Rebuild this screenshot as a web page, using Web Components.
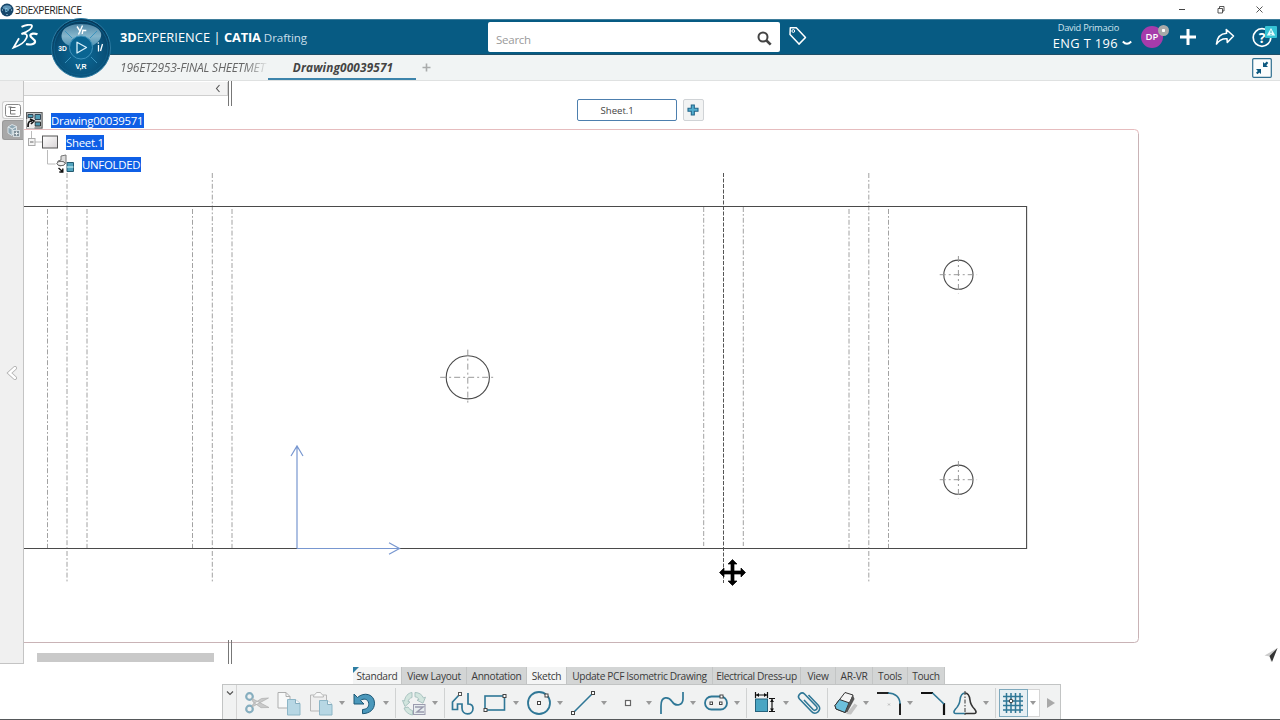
<!DOCTYPE html>
<html lang="en">
<head>
<meta charset="utf-8">
<title>3DEXPERIENCE</title>
<style>
html, body{
  margin:0;
  height:100%;
  overflow:hidden;
  background:#fff;
}
body{
  font-family:"Open Sans","Noto Sans",sans-serif;
  color:#3d3d3d;
}
</style>
</head>
<body>
<app-window></app-window>

<script>
// small helper: one template per element, open shadow root
function define(name, html){
  const tpl = document.createElement('template');
  tpl.innerHTML = html;
  customElements.define(name, class extends HTMLElement{
    constructor(){
      super();
      this.attachShadow({mode:'open'});
      this.shadowRoot.appendChild(tpl.content.cloneNode(true));
    }
  });
}

/* ---------- title bar ---------- */
define('title-bar', `
<style>
:host{
  display:flex;
  align-items:center;
  height:19px;
  background:#fff;
  color:#222;
}
.logo{ width:14px; height:14px; margin-left:0; }
.name{ font-size:10.4px; line-height:18px; margin-left:1px; letter-spacing:-0.5px; flex:1; }
.win{ display:flex; gap:29px; padding-right:15px; }
.win svg{ width:10px; height:10px; fill:none; stroke:#444; }
</style>
<svg class="logo" viewBox="0 0 14 14"><circle cx="7" cy="7" r="6.5" fill="#16466a"/><path d="M2.5 5a4.6 3.6 0 0 1 9 0c-2 2-7 2-9 0z" fill="#5e93b5"/><path d="M5.8 5l3 2-3 2z" fill="none" stroke="#8fd0ee" stroke-width=".8"/><path d="M2 7h1M11 7h1M7 11v1" stroke="#bfe1f1"/></svg>
<span class="name">3DEXPERIENCE</span>
<div class="win">
  <svg viewBox="0 0 10 10"><path d="M2 4.5h6"/></svg>
  <svg viewBox="0 0 10 10"><path d="M2 3.5h4.500V8H2zM3.500 3.500V1.500H8v4.500H6.500" stroke-width=".9"/></svg>
  <svg viewBox="0 0 10 10"><path d="M1.500 1.500l6 6M7.500 1.500l-6 6" stroke-width=".9"/></svg>
</div>
`);

/* ---------- compass ---------- */
define('app-compass', `
<style>
:host{ display:block; width:62px; height:62px; }
svg{ display:block; width:62px; height:62px; }
text{ font-family:"Liberation Sans",sans-serif; font-weight:bold; font-size:8px; fill:#fff; text-anchor:middle; }
</style>
<svg viewBox="0 0 62 62">
  <defs>
    <radialGradient id="ball" cx="50%" cy="62%" r="60%"><stop offset="0" stop-color="#0b6a98"/><stop offset=".7" stop-color="#095078"/><stop offset="1" stop-color="#06395a"/></radialGradient>
    <linearGradient id="cap" x1="0" y1="0" x2="0" y2="1"><stop offset="0" stop-color="#4f86a6"/><stop offset=".55" stop-color="#86b6cc"/><stop offset="1" stop-color="#4f93b5"/></linearGradient>
  </defs>
  <circle cx="31" cy="31" r="29.500" fill="url(#ball)" stroke="#2b7ba3"/>
  <circle cx="31" cy="31" r="27" fill="none" stroke="#0d5f8a"/>
  <path d="M12 16c3-12 35-12 39 0 1 5-2 9-9 13C40 17 23 17 20 29c-6-2-10-7-8-13z" fill="url(#cap)"/>
  <path d="M15 14l7 7M47 14l-7 7M15 46l6-6M47 46l-6-6" stroke="#3c93bd" fill="none"/>
  <circle cx="31" cy="30.500" r="11.500" fill="#0a6592" stroke="#3f92bb"/>
  <path d="M27 25.200l9.500 5.300-9.500 5.500z" fill="none" stroke="#d9f1fb" stroke-width="1.300" stroke-linejoin="round"/>
  <path d="M27 9.500l3 4.500-1.500 3.500M32.500 8.500l-3 7M33 12.500l-.8 4.500M33.300 13.500h3" fill="none" stroke="#fff" stroke-width="1.400"/>
  <text x="12.500" y="34" textLength="8.500" lengthAdjust="spacingAndGlyphs">3D</text>
  <path d="M48.500 28v6.500M50.500 34l2-7" fill="none" stroke="#fff" stroke-width="1.300"/><circle cx="48.300" cy="26" r=".8" fill="#fff"/>
  <text x="31" y="51.500" textLength="11" lengthAdjust="spacingAndGlyphs">V,R</text>
</svg>
`);

/* ---------- blue top bar ---------- */
define('top-bar', `
<style>
:host{
  display:flex;
  align-items:center;
  height:36px;
  background:#075b83;
  border-top:1px solid #3f7d9b;
  box-sizing:border-box;
  box-shadow:inset 0 -1px #1e4f68;
  position:relative;
  color:#fff;
}
svg{ display:block; fill:none; stroke:#fff; }
.ds{ width:28px; height:28px; margin-left:11px; }
app-compass{ position:absolute; left:50px; top:-3px; z-index:3; }
.brand{
  margin-left:81px;
  width:368px;
  display:flex;
  align-items:baseline;
  font-size:12.8px;
  line-height:20px;
  white-space:pre;
}
.brand .a{ letter-spacing:0.06px; }
.brand .c{ font-weight:bold; letter-spacing:-0.15px; }
.brand .d{ font-size:11.6px; color:#c9dfea; letter-spacing:-0.1px; }
.search{
  width:292px;
  height:30px;
  margin-top:-2px;
  background:#fff;
  border-radius:2px;
  display:flex;
  align-items:center;
  justify-content:space-between;
  box-sizing:border-box;
  padding:4px 8px 0 8px;
  font-size:11.5px;
  color:#9a9a9a;
  letter-spacing:-0.25px;
}
.search span{ padding-top:2px; }
.search svg{ width:15px; height:15px; stroke:#444; margin-bottom:1px; }
.tag{ width:20px; height:20px; margin:-3px 0 0 8px; }
.right{ margin-left:auto; margin-top:-2px; display:flex; align-items:center; padding-right:11px; }
.user{ display:flex; flex-direction:column; align-items:flex-end; white-space:nowrap; }
.user .n{ font-size:9.3px; line-height:12px; color:#cfe4ee; padding-right:13px; letter-spacing:-0.26px;}
.user .t{ font-size:12.8px; line-height:18px; font-weight:500; display:flex; align-items:center; gap:4px; letter-spacing:.4px; }
.user .t svg{ width:10px; height:6px; }
.avatar{
  width:22px; height:22px; margin-left:9px; border-radius:50%;
  background:#a63bab; font-size:9.500px; font-weight:600; line-height:22px; text-align:center; position:relative;
}
.avatar i{
  position:absolute; right:-6px; top:-1px; width:7px; height:7px; box-sizing:content-box;
  border-radius:50%; background:radial-gradient(#fff 1.300px,#a9aaa9 2px); border:2px solid #a9aaa9;
}
.plus{ width:18px; height:18px; margin-left:16px; }
.share{ width:20px; height:20px; margin-left:18px; }
.help{ width:26px; height:24px; margin-left:17px; margin-right:-9px; }
.help text{ font-family:"Open Sans",sans-serif; font-weight:bold; font-size:14px; fill:#fff; stroke:none; text-anchor:middle; }
</style>
<svg class="ds" viewBox="0 0 28 28">
  <path d="M10.500 2.800c4-2 10.500-3 10.500-.8 0 2.800-5 5.800-10.500 7.800" stroke-width="1.900"/>
  <path d="M10.500 9.800c4.500-.8 6.500.8 5 4.200C13.800 18 9 21.500 2.500 23.600L8 14.200" stroke-width="1.800"/>
  <path d="M26.500 10.300c-3.200-1.400-7-.7-7.200 1.300-.2 2 5 3.500 4.800 6-.2 2.800-5 3.500-9.100 2.400" stroke-width="2.200"/>
</svg>
<app-compass></app-compass>
<div class="brand"><b>3D</b><span class="a">EXPERIENCE | </span><span class="c">CATIA </span><span class="d">Drafting</span></div>
<div class="search"><span>Search</span>
  <svg viewBox="0 0 15 15"><circle cx="6" cy="6" r="4.500" stroke-width="2"/><path d="M9.500 9.500l4.200 4.200" stroke-width="2.600"/></svg>
</div>
<svg class="tag" viewBox="0 0 20 20"><path d="M2.300 1.800h6l9.200 9.700-6.500 6.600-9-9.600z" stroke-width="1.500" stroke-linejoin="round"/><circle cx="5.300" cy="5" r="1.400"/></svg>
<div class="right">
  <div class="user">
    <span class="n">David Primacio</span>
    <span class="t"><span>ENG T 196</span><svg viewBox="0 0 10 6"><path d="M.8 1.500Q5 6 9.200 1.500" stroke-width="1.900"/></svg></span>
  </div>
  <div class="avatar">DP<i></i></div>
  <svg class="plus" viewBox="0 0 18 18"><path d="M9 1v16M1 9h16" stroke-width="3"/></svg>
  <svg class="share" viewBox="0 0 20 20"><path d="M11.300 2.500l7.200 6.500-6.200 6.500-.3-3.700c-5-.4-8 1.600-10.500 5.200C2 11 5.500 6.700 11.600 6.300z" stroke-width="1.600" stroke-linejoin="round"/></svg>
  <svg class="help" viewBox="0 0 26 24"><circle cx="10" cy="12.500" r="8.800" stroke-width="1.700"/><text x="10" y="17.500">?</text><rect x="13" y="1" width="12" height="12" rx="1" fill="#36c3d5" stroke="none"/><path d="M19 3l4.200 7.500h-8.400z" fill="#e8fbfd" stroke="none"/><path d="M19 5.500v2.600M19 9v1" stroke="#2aa6b8"/></svg>
</div>
`);

/* ---------- document tabs ---------- */
define('doc-tabs', `
<style>
:host{
  display:flex;
  height:26px;
  box-sizing:border-box;
  background:#f1f4f4;
  border-bottom:1px solid #dfe1e1;
  font-size:12px;
  font-style:italic;
  line-height:26px;
  padding-left:120px;
}
.old{
  width:148px; overflow:hidden; white-space:nowrap; color:#666; letter-spacing:-0.2px; flex:none;
  -webkit-mask-image:linear-gradient(90deg,#000 125px,transparent 149px);
  mask-image:linear-gradient(90deg,#000 125px,transparent 149px);
}
.cur{ width:148px; text-align:center; font-weight:bold; color:#444; letter-spacing:0.15px; line-height:25px; box-shadow:inset 0 -2px #3d84ab; padding-left:2px; box-sizing:border-box; font-size:11.8px; }
.add{ width:9px; height:9px; margin:8px 0 0 6px; }
.fit{ margin:3px 8px 0 auto; width:20px; height:20px; }
</style>
<div class="old">196ET2953-FINAL SHEETMET</div>
<div class="cur">Drawing00039571</div>
<svg class="add" viewBox="0 0 9 9"><path d="M4.500 .5v8M.5 4.500h8" stroke="#a9abab" stroke-width="1.600"/></svg>
<svg class="fit" viewBox="0 0 20 20"><rect x=".7" y=".7" width="18.600" height="18.600" rx="1" fill="#fbfdfd" stroke="#2f6f90" stroke-width="1.200"/><path d="M9 11v5L7.300 14.400 5.500 16.200 4 14.700 5.800 13 4 11zM11 9V4l1.700 1.600L14.800 3.500 16.300 5 14.300 7.200 16 9z" fill="#0c587f"/></svg>
`);

/* ---------- left rail ---------- */
define('side-rail', `
<style>
:host{
  display:flex;
  flex-direction:column;
  align-items:flex-end;
  justify-content:space-between;
  width:24px;
  height:583px;
  box-sizing:border-box;
  padding-top:20px;
  background:#f0f0f0;
  border-right:1px solid #c4c4c4;
  border-bottom:1px solid #c4c4c4;
  flex:none;
}
.top{ display:flex; flex-direction:column; gap:1px; }
.b{ width:21px; height:18px; box-sizing:border-box; background:#fafafa; border:1px solid #d0d0d0; border-right:0; border-radius:3px 0 0 3px; display:flex; align-items:center; justify-content:center; }
.b.on{ height:20px; background:#a8a8a8; border-color:#999; }
.arrow{ width:12px; height:14px; margin:0 5px 283px 0; }
</style>
<div class="top">
  <div class="b"><svg width="16" height="13" viewBox="0 0 16 13" fill="none" stroke="#777"><rect x=".5" y=".5" width="15" height="12" rx="2" fill="#fff" stroke="#888"/><path d="M3.500 3h3M5.500 3v7M5.500 6.500h5M5.500 10h5M5.500 3.500h5"/></svg></div>
  <div class="b on"><svg width="16" height="15" viewBox="0 0 16 15"><path d="M3 4l4-2.500 4.500 2v4L7 12.500 3 10z" fill="#8fa7b3" stroke="#dfe8ec" stroke-width=".9"/><path d="M3 4l4.200 2 4.300-2.300M7.200 6v6" stroke="#e4ecef" fill="none"/><rect x="8.500" y="7.500" width="6" height="6" fill="#7f8f98" stroke="#d9e2e6" stroke-width=".9"/><path d="M11.500 8.500v4M9.500 10.500h4" stroke="#e8eef0"/></svg></div>
</div>
<svg class="arrow" viewBox="0 0 12 14"><path d="M9 2L3.500 7 9 12" fill="none" stroke="#b0b0b0" stroke-width="4" stroke-linecap="round"/><path d="M9 2L3.500 7 9 12" fill="none" stroke="#fff" stroke-width="2.400" stroke-linecap="round"/></svg>
`);

/* ---------- drawing ---------- */
define('drawing-sheet', `
<style>
:host{ display:block; }
svg{ display:block; width:1256px; height:639px; fill:none; }
.part{ stroke:#4a4a4a; stroke-width:1.100; }
.bend{ stroke:#a2a2a2; stroke-dasharray:5 2 1.800 2; }
.axis{ stroke:#7897d0; stroke-width:1.200; }
</style>
<svg viewBox="24 81 1256 639">
  <path d="M24 129.500H1134.500q4 0 4 4" stroke="#e6bcbe"/>
  <path d="M1138.500 133.500V638.500q0 4-4 4H24" stroke="#c9b3b6"/>
  <g class="bend" id="bends"></g>
  <path d="M723.500 173V583" stroke="#555" stroke-dasharray="4 1.500"/>
  <path class="part" d="M24 206.500H1026.600V548.500H24"/>
  <g class="part" id="holes"></g>
  <g stroke="#999" stroke-dasharray="6 3 2 3" id="marks"></g>
  <path class="axis" d="M297 548.500V446M291 456L297 446 303 456M297 548.500H399M389 542.700L399.500 548.500 389 554.200"/>
  <path d="M228.500 81v25M231.500 81v25M228.500 640v24M231.500 640v24" stroke="#777"/>
  <path d="M1277.500 648l-13 7.500 5 1 1.500 5.500z" fill="#ccc"/>
  <path d="M1277.500 648l-8 8 2.500 6z" fill="#333"/>
</svg>
`);

/* ---------- structure tree ---------- */
define('tree-row', `
<style>
:host{ display:flex; align-items:center; height:22px; }
.label{ background:#0f5fe6; color:#fff; font-size:11.4px; line-height:15px; height:15px; letter-spacing:-0.27px; white-space:nowrap; margin-left:var(--gap,7px); width:var(--w); }
</style>
<slot name="icon"></slot><span class="label"><slot></slot></span>
`);

define('structure-tree', `
<style>
:host{ display:block; width:205px; }
.head{ height:14px; background:#f3f3f3; border-bottom:1px solid #cfcfcf; border-right:1px solid #cfcfcf; box-sizing:border-box; display:flex; justify-content:flex-end; align-items:center; padding-right:6px; width:204px; }
.rows{ padding-top:13px; }
svg{ flex:none; }
</style>
<div class="head"><svg width="6" height="9" viewBox="0 0 6 9"><path d="M4.500 1L1.500 4.500 4.500 8" fill="none" stroke="#555" stroke-width="1.100"/></svg></div>
<div class="rows">
  <tree-row style="padding-left:2px;--w:93px;--gap:8px">
    <svg slot="icon" width="17" height="17" viewBox="0 0 17 17"><rect x=".6" y=".6" width="15.500" height="15.500" fill="#d5dadb" stroke="#555" stroke-width="1.100"/><path d="M2 2.500h5v3H2zM9 2.500h5.500v5H9z" fill="#4f9db6" stroke="#345"/><path d="M9 10h5.500v4H9z" fill="#4d99b2" stroke="#333"/><rect x=".5" y="7" width="8" height="9.500" fill="#eee"/><path d="M2 15c0-5 1-6 4-6M4 7l4 2-3 3" stroke="#111" fill="none" stroke-width="1.700"/></svg>
    Drawing00039571</tree-row>
  <tree-row style="padding-left:4px;--w:38px">
    <svg slot="icon" width="31" height="22" viewBox="0 0 31 22"><path d="M3.500 0v7M7 11h7" stroke="#bbb"/><rect x=".5" y="7.500" width="6.500" height="7" fill="#f5f5f5" stroke="#aaa"/><path d="M2 11h3.500" stroke="#666"/><defs><linearGradient id="s" x1="0" y1="0" x2="1" y2="1"><stop offset="0" stop-color="#fff"/><stop offset="1" stop-color="#d8d4d6"/></linearGradient></defs><rect x="14.500" y="5" width="15" height="12" fill="url(#s)" stroke="#555"/></svg>
    Sheet.1</tree-row>
  <tree-row style="padding-left:23px;--w:59px">
    <svg slot="icon" width="28" height="22" viewBox="0 0 28 22" overflow="visible"><path d="M.5 -3v14h8" stroke="#bbb" fill="none"/><path d="M14 3l5-1v8l-6 3-3-2 1-3 3-1z" fill="#ddd" stroke="#777"/><ellipse cx="14" cy="10.500" rx="4" ry="2.200" fill="#f3f3f3" stroke="#666"/><path d="M20 9.500h6.500v9H20z" fill="#52a4bf" stroke="#245b70"/><path d="M20 14h6.500" stroke="#dff"/><path d="M11.500 15l4 3.500M15.800 15.500V19h-3.500" stroke="#111" stroke-width="1.400" fill="none"/></svg>
    UNFOLDED</tree-row>
</div>
`);

/* ---------- sheet tabs ---------- */
define('sheet-tabs', `
<style>
:host{ display:flex; gap:6px; }
.tab{ width:100px; height:22px; box-sizing:border-box; border:1px solid #4d7fae; border-radius:2px; background:#fff; font-size:9.6px; line-height:21px; padding-left:23px; color:#444; }
.add{ width:21px; height:22px; box-sizing:border-box; border:1px solid #d0d3d6; border-radius:2px; background:#f2f3f3; display:flex; align-items:center; justify-content:center; }
</style>
<div class="tab">Sheet.1</div>
<div class="add"><svg width="12" height="12" viewBox="0 0 12 12"><path d="M4.300 1h3v3.300H11v3H7.300V11h-3V7.300H1v-3h3.300z" fill="#53afd0" stroke="#23668a" stroke-width="1.100"/></svg></div>
`);

/* ---------- action bar ---------- */
define('bar-tab', `
<style>
:host{
  display:block; box-sizing:border-box; height:17px; line-height:18px; font-size:10.2px; letter-spacing:-0.3px;
  text-align:center; white-space:nowrap; background:#d3d5d5; color:#3b3b3b; border-right:1px solid #c3c5c5; position:relative;
}
:host([on]){ background:#f4f5f5; }
:host([marked])::before{
  content:""; position:absolute; left:0; top:0; border-top:6px solid #2d7ea3; border-right:6px solid transparent;
}
</style><slot></slot>
`);

define('tool-button', `
<style>
:host{ display:flex; align-items:center; height:28px; margin-right:4px; flex:none; }
:host([menu]){ margin-right:0; }
::slotted(svg){ width:26px; height:26px; display:block; }
.caret{ display:none; width:16px; justify-content:center; }
:host([menu]) .caret{ display:flex; }
.caret i{ border:3px solid transparent; border-top:4px solid #999; border-bottom:0; }
:host([on]) .ico{ border:1px solid #7ea9bd; background:#e7eff3; width:29px; display:flex; justify-content:center; box-sizing:border-box; height:28px; align-items:center; }
:host([on]) .caret{ width:12px; height:28px; align-items:center; background:#fff; border:1px solid #d5d5d5; border-left:0; box-sizing:border-box; }
</style>
<span class="ico"><slot></slot></span><span class="caret"><i></i></span>
`);

define('action-bar', `
<style>
:host{ display:flex; flex-direction:column; }
.tabs{ display:flex; margin-left:131px; width:592px; }
.tools{
  display:flex; align-items:center; gap:2px; width:839px; height:35px; box-sizing:border-box;
  background:#f1f2f2; border:1px solid #c2c4c4; border-bottom:0; padding-top:2px;
}
.fold{ width:14px; align-self:stretch; border-right:1px solid #d4d4d4; padding-top:3px; margin:-2px 4.500px 0 0; box-sizing:border-box; display:flex; justify-content:center; }
.sep{ width:1px; height:30px; background:#d0d2d2; margin:0 3px 0 -1px; flex:none; }
svg{ fill:none; stroke:#2f7796; stroke-width:1.600; }
.dim{ opacity:.55; }
.more{ border:5px solid transparent; border-left:8px solid #a9a9a9; border-right:0; margin-left:5px; }
</style>
<div class="tabs">
  <bar-tab on marked style="width:49px">Standard</bar-tab>
  <bar-tab style="width:65px">View Layout</bar-tab>
  <bar-tab style="width:60px">Annotation</bar-tab>
  <bar-tab on style="width:40px">Sketch</bar-tab>
  <bar-tab style="width:146px;letter-spacing:-0.35px">Update PCF Isometric Drawing</bar-tab>
  <bar-tab style="width:88px;letter-spacing:-0.38px">Electrical Dress-up</bar-tab>
  <bar-tab style="width:35px">View</bar-tab>
  <bar-tab style="width:37px">AR-VR</bar-tab>
  <bar-tab style="width:35px">Tools</bar-tab>
  <bar-tab style="width:37px">Touch</bar-tab>
</div>
<div class="tools">
  <div class="fold"><svg width="8" height="6" viewBox="0 0 8 6" style="margin-top:2px"><path d="M1 1.500l3 3 3-3" stroke="#555" stroke-width="1.200"/></svg></div>

  <tool-button><svg class="dim" viewBox="0 0 26 26"><circle cx="5.500" cy="6.500" r="3.300" stroke-width="2.200"/><circle cx="5.500" cy="19" r="3.300" stroke-width="2.200"/><path d="M8 8.500l17 9-8 .2L9 12zM8 17l16.500-9-7 .5L9 14z" fill="#aaa" stroke="#777" stroke-width=".7"/></svg></tool-button>
  <tool-button><svg class="dim" viewBox="0 0 26 26"><path d="M2 2.500h8l4 4V18H2z" fill="#fff" stroke="#777" stroke-width="1"/><path d="M10 2.500v4h4" stroke="#777" stroke-width="1"/><path d="M11.500 9.500h8l4.500 4V25H11.500z" fill="#88c2da" stroke="#3d86a4" stroke-width="1"/><path d="M19.500 9.500v4h4.500" fill="#fff" stroke-width="1"/></svg></tool-button>
  <tool-button menu><svg class="dim" viewBox="0 0 26 26"><path d="M2.500 5h16v16h-16z" fill="#eee" stroke="#888" stroke-width="1"/><path d="M5.500 7c0-3 2-2 3-4.500h4c1 2.500 3 1.500 3 4.500z" fill="#fff" stroke="#888" stroke-width="1"/><path d="M11.500 10.500h8l4.500 4V25H11.500z" fill="#88c2da" stroke="#3d86a4" stroke-width="1"/><path d="M19.500 10.500v4h4.500" fill="#fff" stroke-width="1"/></svg></tool-button>
  <tool-button menu><svg viewBox="0 0 26 26"><path d="M2 4v10h10L8.500 10.500c3-2.500 7.700-1.500 8.200 2.800.4 3.800-2 6-6.200 6.200v4.200c7-.2 12-4 12-10.500C22.500 4 12 1.500 5.500 7.500z" fill="#4b98bb" stroke="#1d5876" stroke-width="1"/></svg></tool-button>
  <i class="sep"></i>
  <tool-button menu><svg class="dim" viewBox="0 0 26 26"><path d="M11 2.500v5c-2 .5-3.500 2-4 4l2 .5-5 4.500-2.500-6 2 .5C4 6.500 7 3 11 2.500zM14 2.500c4 0 7 2 8.500 5.500l2-.8-2.500 6-6-3 2-.8C17 7.500 15.500 7 14 6.800zM3 18l4-1c1 2 2.500 3 4.500 3.500V25C7.500 24.500 4.500 22 3 18z" fill="#b9dccf" stroke="#6d9a96" stroke-width="1"/><rect x="12.500" y="14.500" width="11.500" height="10" fill="#dfe9ee" stroke="#557" stroke-width="1"/><path d="M14 17h8l-6 5h7" stroke="#557" stroke-width="1.500"/></svg></tool-button>
  <i class="sep"></i>
  <tool-button><svg viewBox="0 0 26 26"><path d="M9.500 4.500L2.500 12v7.500h5v-5.500h4.500v4c0 8 11 7.500 11 .5 0-3-2-4.500-5-4.500V3" stroke-width="1.700"/><rect x="8.500" y="2.500" width="3" height="3" fill="#fff" stroke="#555" stroke-width="1"/></svg></tool-button>
  <tool-button menu><svg viewBox="0 0 26 26"><rect x="3" y="6" width="19.500" height="14"/><rect x="2" y="18.500" width="3" height="3" fill="#fff" stroke="#444" stroke-width="1"/><rect x="21" y="4.500" width="3" height="3" fill="#fff" stroke="#444" stroke-width="1"/></svg></tool-button>
  <tool-button menu><svg viewBox="0 0 26 26"><circle cx="13" cy="13" r="11" stroke-width="1.800"/><rect x="11.500" y="11.500" width="3" height="3" fill="#fff" stroke="#444" stroke-width="1"/><rect x="19" y="4" width="3" height="3" fill="#fff" stroke="#444" stroke-width="1"/></svg></tool-button>
  <tool-button menu><svg viewBox="0 0 26 26"><path d="M3 23L23 3"/><rect x="1.500" y="21.500" width="3" height="3" fill="#fff" stroke="#444" stroke-width="1"/><rect x="21.500" y="1.500" width="3" height="3" fill="#fff" stroke="#444" stroke-width="1"/></svg></tool-button>
  <tool-button menu style="margin-left:1.500px"><svg viewBox="0 0 26 26"><rect x="10.500" y="10.500" width="5" height="5" fill="#fff" stroke="#666" stroke-width="1.200"/></svg></tool-button>
  <tool-button menu><svg viewBox="0 0 26 26"><path d="M2 24v-8c0-11 8-9 11-4.500C17 17.500 24 15 24 9V2" stroke-width="1.700"/></svg></tool-button>
  <tool-button menu><svg viewBox="0 0 26 26"><rect x="2" y="6.500" width="22" height="13" rx="6.500" stroke-width="1.800"/><g fill="#fff" stroke="#444" stroke-width="1"><rect x="7" y="12" width="2.500" height="2.500"/><rect x="16.500" y="12" width="2.500" height="2.500"/><rect x="17" y="5" width="3" height="3"/></g></svg></tool-button>
  <i class="sep"></i>
  <tool-button menu><svg viewBox="0 0 26 26"><rect x="3.500" y="9" width="12" height="12.500" fill="#4aa5c3" stroke="#26637d" stroke-width="1"/><path d="M3.500 2v6M15.500 2v6M3.500 5h12M17 8.500h6M17 21.500h6M20 9v12.500" stroke="#111" stroke-width="1.200"/><path d="M4 5l3-2v4zM15 5l-3-2v4zM20 9l-2 3h4zM20 21.500l-2-3h4z" fill="#111" stroke="none"/></svg></tool-button>
  <tool-button><svg viewBox="0 0 26 26"><path d="M8 10l9 9.500c2 2 5.500-.5 3.500-3L8.500 4C5.500 1 .5 5.500 3.500 9l12 12.500c4 4.500 11-1.500 7-6L12.500 5" stroke-width="1.600"/></svg></tool-button>
  <i class="sep"></i>
  <tool-button menu style="margin-left:-1px"><svg viewBox="0 0 26 26"><path d="M14 24l5 .5 6.500-9-3-2z" fill="#c4c4c4" stroke="none"/><path d="M13 2.500l8 2.500-7.500 17.500L4 19l-1-3.500z" fill="#f4f4f4" stroke="#333" stroke-width="1"/><path d="M7.500 9.500l9.500 3.300-4 9.700L4 19l-1-3.500z" fill="#6cc0dc" stroke="#333" stroke-width="1"/><path d="M21 5l1.500 4-7 13-2 .5 3.500-9.700z" fill="#555" stroke="none"/></svg></tool-button>
  <tool-button menu><svg viewBox="0 0 26 26"><path d="M1 3h12M24 13v12" stroke="#222" stroke-width="2"/><path d="M12 3c7 0 12 4 12 11"/><path d="M12 13.500l2 2M14 13.500l-2 2" stroke="#aaa" stroke-width=".8"/></svg></tool-button>
  <tool-button><svg viewBox="0 0 26 26"><path d="M1 3h12M24 13v12" stroke="#111" stroke-width="2.200"/><path d="M12.500 3L24 14" stroke-width="1.700"/></svg></tool-button>
  <tool-button menu><svg viewBox="0 0 26 26"><path d="M13 3c-3 0-4.500 3-5 7-.4 4-1.500 6-4.500 9-2.500 3-1.500 4.500 0 4.500H13"/><path d="M13 3c3 0 4.500 3 5 7 .4 4 1.500 6 4.500 9 2.500 3 1.500 4.500 0 4.500H13" stroke="#333"/><path d="M13 1v25" stroke="#555" stroke-width="1.200" stroke-dasharray="4 1.500 1.500 1.500"/></svg></tool-button>
  <i class="sep"></i>
  <tool-button menu on style="margin-left:-2.500px"><svg viewBox="0 0 26 26"><path d="M6.500 3v20M11 3v20M15.500 3v20M20 3v20M3 6.500h20M3 11h20M3 15.500h20M3 20h20" stroke-width="1.500"/><circle cx="11" cy="11" r="1.800" fill="#fff" stroke="#333" stroke-width="1"/></svg></tool-button>
  <i class="more"></i>
</div>
`);

/* ---------- window ---------- */
define('app-window', `
<style>
:host{ display:flex; flex-direction:column; width:1280px; height:720px; position:relative; overflow:hidden; background:#fff; }
.work{ display:flex; height:639px; align-items:flex-start; border-bottom:1px solid #55585a; box-sizing:border-box; }
.main{ flex:1; height:638px; position:relative; display:flex; flex-direction:column; justify-content:space-between; }
drawing-sheet{ position:absolute; left:0; top:0; }
.top, .bottom{ position:relative; }
.top{ display:flex; padding-top:1px; }
sheet-tabs{ margin:17px 0 0 347.500px; }
.scroll{ width:177px; height:9px; margin:0 0 5px 13px; background:#c9c9c9; }
action-bar{ margin-left:198px; }
.pointer{ position:absolute; left:718px; top:558px; width:29px; height:29px; z-index:4; }
</style>
<title-bar></title-bar>
<top-bar></top-bar>
<doc-tabs></doc-tabs>
<div class="work">
  <side-rail></side-rail>
  <div class="main">
    <drawing-sheet></drawing-sheet>
    <div class="top"><structure-tree></structure-tree><sheet-tabs></sheet-tabs></div>
    <div class="bottom"><div class="scroll"></div><action-bar></action-bar></div>
  </div>
</div>
<svg class="pointer" viewBox="0 0 29 29"><path d="M14.500 1.500l4.500 4.500h-3v7h7V10l4.500 4.500L23 19v-3h-7v7h3l-4.500 4.500L10 23h3v-7H6v3l-4.500-4.500L6 10v3h7V6h-3z" fill="#000" stroke="#000" stroke-width=".7" stroke-linejoin="round"/></svg>
`);

// bend lines: [x, top, bottom]
const sheet = document.querySelector('app-window').shadowRoot.querySelector('drawing-sheet').shadowRoot;
const bends = [
  [47.5,209,548],[67,173,583],[87,209,548],
  [192.5,209,548],[212.3,173,583],[232,209,548],
  [703.7,207,546],[743.3,207,546],
  [849,209,548],[868.8,173,583],[888.5,209,548]
];
sheet.querySelector('#bends').innerHTML = bends.map(b => `<path d="M${b[0]} ${b[1]}V${b[2]}"/>`).join('');

const holes = [[467.8,377.3,21.6],[958.4,274.7,14.6],[958.4,479.7,14.6]];
sheet.querySelector('#holes').innerHTML = holes.map(h => `<circle cx="${h[0]}" cy="${h[1]}" r="${h[2]}"/>`).join('');
sheet.querySelector('#marks').innerHTML = holes.map(h => {
  const e = h[2] * 1.28;
  return `<path d="M${h[0]-e} ${h[1]}h${e*2}M${h[0]} ${h[1]-e}v${e*2}"/>`;
}).join('');
</script>
</body>
</html>
